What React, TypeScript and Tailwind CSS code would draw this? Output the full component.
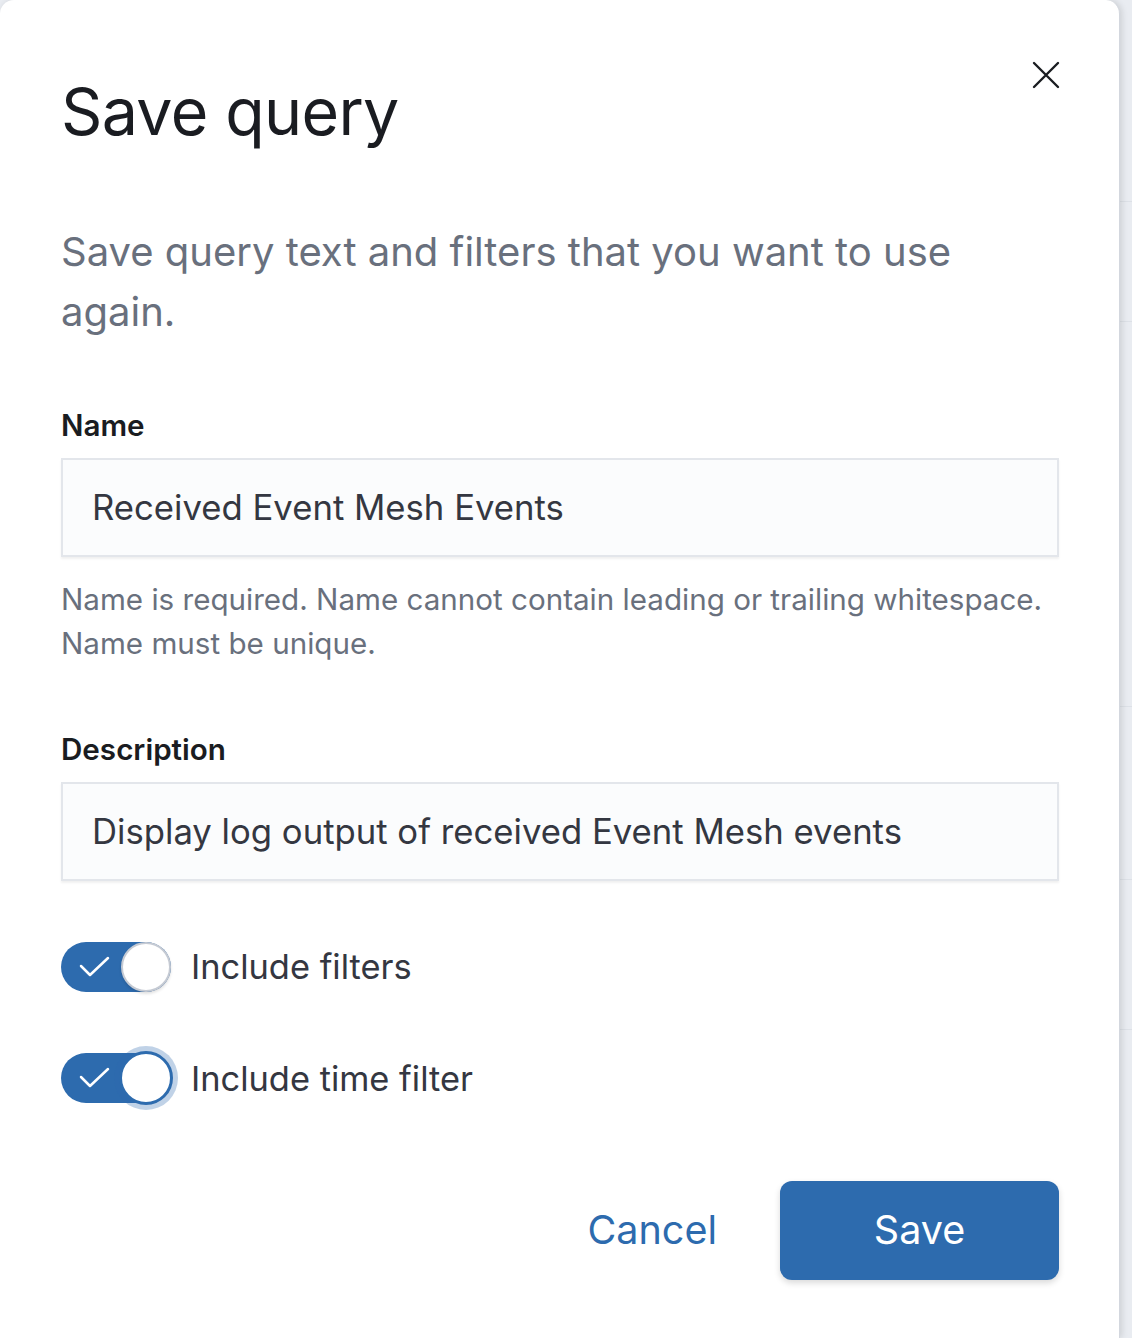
import React from "react";

function Toggle({ label, focused }: { label: string; focused?: boolean }) {
  return (
    <div className="flex items-center gap-[20px]">
      <div className="relative w-[110px] h-[50px] rounded-full bg-[#2d6bae]">
        <svg
          className="absolute left-[18px] top-[13px]"
          width="32"
          height="24"
          viewBox="0 0 32 24"
          fill="none"
        >
          <path d="M2 11 L11 20 L29 3" stroke="white" strokeWidth="2.5" strokeLinecap="round" strokeLinejoin="round" />
        </svg>
        <div
          className={
            focused
              ? "absolute right-[-2px] top-[-2px] w-[54px] h-[54px] rounded-full bg-white border-[3px] border-[#2d6bae] shadow-[0_0_0_5px_rgba(45,107,174,0.3)]"
              : "absolute right-0 top-0 w-[50px] h-[50px] rounded-full bg-white border-2 border-[#c5cad3] shadow-[0_2px_3px_rgba(0,0,0,0.12)]"
          }
        />
      </div>
      <span className="text-[34.4px] text-[#343741]">{label}</span>
    </div>
  );
}

export default function App() {
  return (
    <div
      className="flex w-[1132px] h-[1338px] bg-[#e9ecf1] overflow-hidden"
      style={{ fontFamily: "Inter, 'Noto Sans', sans-serif" }}
    >
      <div className="relative w-[1120px] h-full bg-white rounded-t-[14px] border-r border-[#d3d7de] shadow-[2px_0_6px_rgba(0,0,0,0.12)] pl-[61px] pr-[60px] pt-[72px]">
        <button className="absolute right-[58px] top-[60px] w-[30px] h-[30px] flex items-center justify-center">
          <svg width="28" height="28" viewBox="0 0 28 28" fill="none">
            <path d="M2 2 L26 26 M26 2 L2 26" stroke="#1a1c21" strokeWidth="2.4" strokeLinecap="round" />
          </svg>
        </button>

        <h1 className="text-[64.5px] leading-[80px] text-[#1a1c21] tracking-[-0.01em]">Save query</h1>

        <p className="mt-[70px] text-[40px] leading-[60px] text-[#69707d] max-w-[960px]">
          Save query text and filters that you want to use again.
        </p>

        <div className="mt-[63px]">
          <label className="block text-[29.6px] leading-[40px] font-semibold text-[#1a1c21]">Name</label>
          <div className="mt-[13px] h-[99px] bg-[#fbfcfd] border-2 border-[#e3e6eb] shadow-[0_2px_2px_rgba(0,0,0,0.06)] flex items-center px-[29px]">
            <span className="text-[34.7px] text-[#343741]">Received Event Mesh Events</span>
          </div>
          <p className="mt-[20px] text-[29.6px] leading-[44px] text-[#69707d]">
            Name is required. Name cannot contain leading or trailing whitespace.
            <br />
            Name must be unique.
          </p>
        </div>

        <div className="mt-[64px]">
          <label className="block text-[29.6px] leading-[40px] font-semibold text-[#1a1c21]">Description</label>
          <div className="mt-[13px] h-[99px] bg-[#fbfcfd] border-2 border-[#e3e6eb] shadow-[0_2px_2px_rgba(0,0,0,0.06)] flex items-center px-[29px]">
            <span className="text-[34.7px] text-[#343741]">Display log output of received Event Mesh events</span>
          </div>
        </div>

        <div className="mt-[60px] flex flex-col gap-[60px]">
          <Toggle label="Include filters" />
          <Toggle label="Include time filter" focused />
        </div>

        <div className="mt-[77px] flex justify-end items-center gap-[63px]">
          <button className="text-[39.5px] text-[#2d6bae]">Cancel</button>
          <button className="w-[279px] h-[99px] rounded-[12px] bg-[#2d6bae] text-white text-[39.5px] shadow-[0_3px_6px_rgba(0,0,0,0.15)]">
            Save
          </button>
        </div>
      </div>
      <div className="flex-1 flex flex-col">
        <div className="h-[202px] border-b border-[#dde1e7]" />
        <div className="h-[120px] border-b border-[#dde1e7]" />
        <div className="h-[385px] border-b border-[#dde1e7]" />
        <div className="h-[173px] border-b border-[#dde1e7]" />
        <div className="h-[150px] border-b border-[#dde1e7]" />
      </div>
    </div>
  );
}
